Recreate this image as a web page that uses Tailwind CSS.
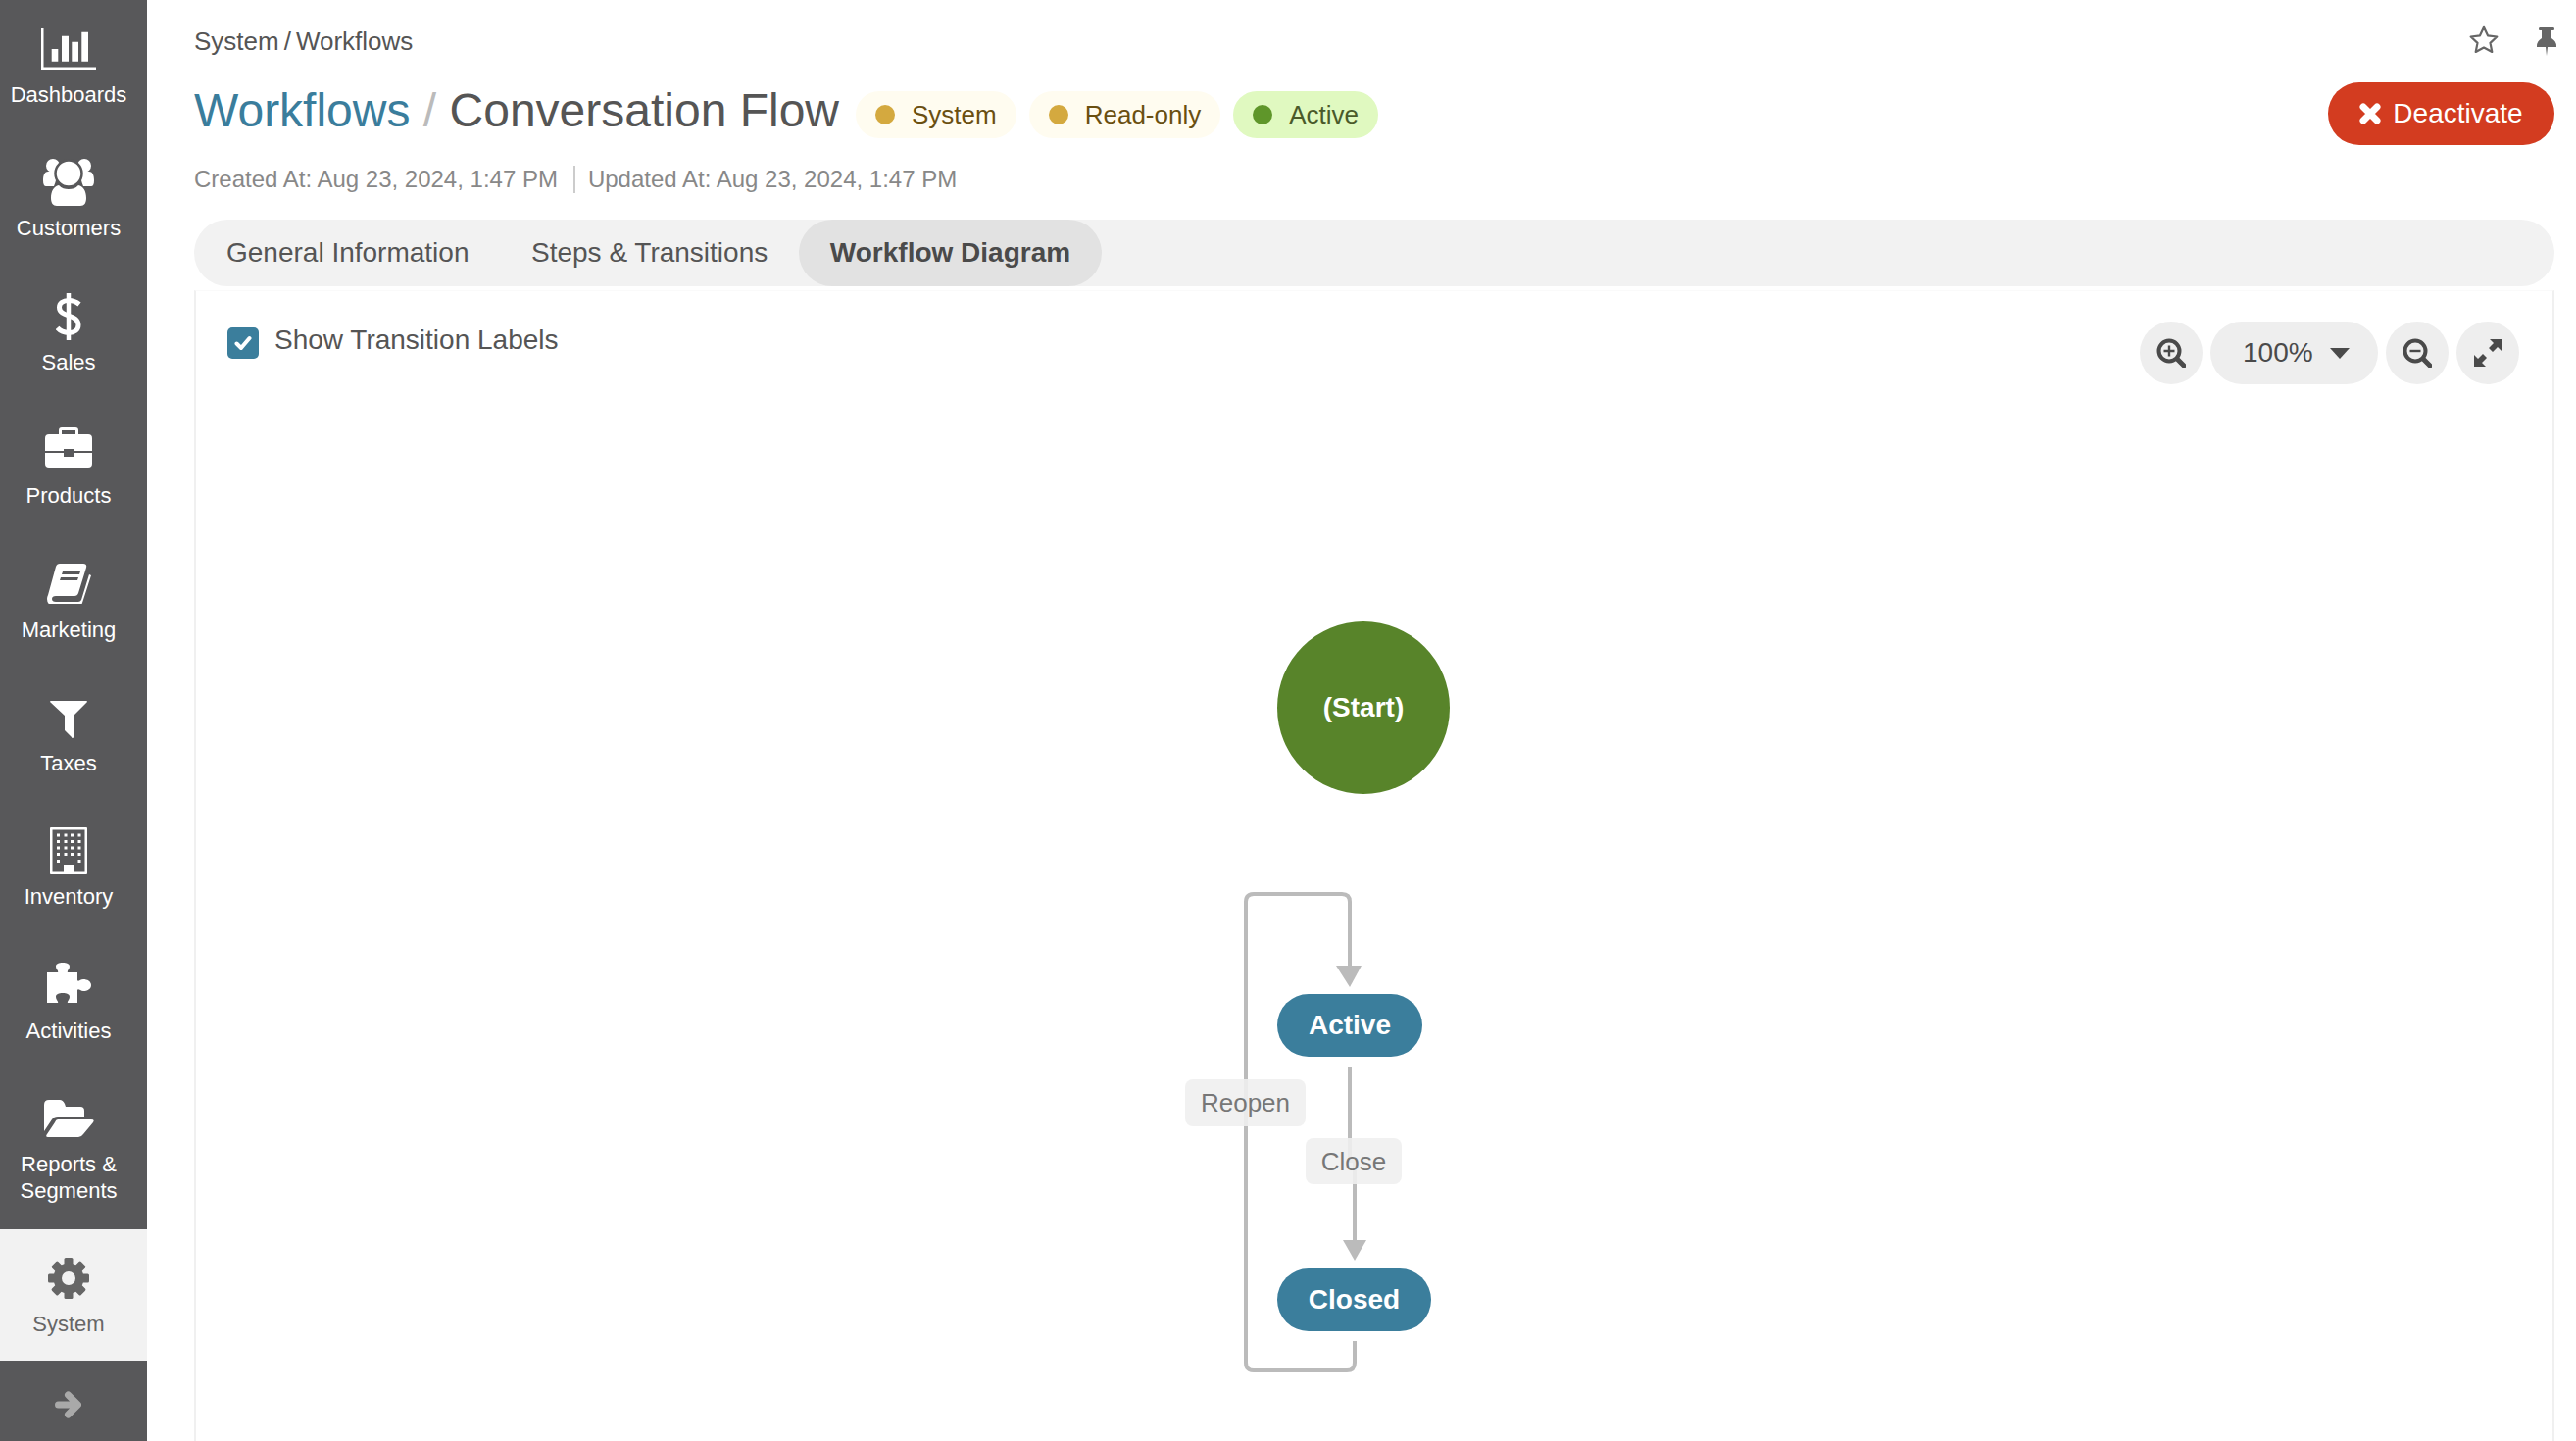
<!DOCTYPE html>
<html lang="en">
<head>
  <meta charset="UTF-8" />
  <meta name="viewport" content="width=device-width, initial-scale=1.0" />
  <title>Workflows - Conversation Flow</title>
  <script src="https://cdn.jsdelivr.net/npm/@tailwindcss/browser@4"></script>
</head>
<body class="flex h-[1470px] w-[2628px] overflow-hidden bg-white [font-family:'Liberation_Sans',Arial,sans-serif] text-[#555]">

  <!-- Sidebar -->
  <nav class="flex h-full w-[150px] shrink-0 flex-col bg-[#58585a] text-[22px] leading-[27px] text-white">
    <a class="flex h-[136.4px] flex-col items-center pr-[10px] pt-[26px]">
      <span class="flex h-[48px] items-center">
        <svg width="56" height="42" viewBox="0 0 56 42" fill="#fff"><path d="M0 0h2.500v39.500H56V42H0z"/><path d="M10.700 21h6.600v12.700h-6.600zM21 7.700h7v26h-7zM31.300 13.700h6.700v20h-6.700zM41.300 3.700H48v30h-6.700z"/></svg>
      </span>
      <span class="mt-[9px]">Dashboards</span>
    </a>
    <a class="flex h-[136.4px] flex-col items-center pr-[10px] pt-[26px]">
      <span class="flex h-[48px] items-center">
        <svg width="52" height="48" viewBox="0 0 52 48" fill="#fff"><circle cx="10" cy="7" r="7"/><circle cx="42" cy="7" r="7"/><path d="M5 13c-3 0-5 3-5 9 0 4 1 6 3 6h8c2-5 3-9 3-15zM47 13c3 0 5 3 5 9 0 4-1 6-3 6h-8c-2-5-3-9-3-15z"/><circle cx="26" cy="15" r="13.500" stroke="#58585a" stroke-width="2.500"/><path d="M16 27c3 3 6 4 10 4s7-1 10-4c5 1 8 6 8 13 0 5-2 8-6 8H14c-4 0-6-3-6-8 0-7 3-12 8-13z"/></svg>
      </span>
      <span class="mt-[9px]">Customers</span>
    </a>
    <a class="flex h-[136.4px] flex-col items-center pr-[10px] pt-[26px]">
      <span class="flex h-[48px] items-center">
        <svg width="26" height="48" viewBox="0 0 26 48" fill="none" stroke="#fff"><path d="M13 0v48" stroke-width="4.500"/><path d="M24 11.500C20.500 8.500 17 7.500 13 7.500 7 7.500 3.500 10.500 3.500 14.500 3.500 25 23 21 23 32.500 23 37.500 19 40.500 13 40.500 8.500 40.500 4.500 39 1.500 35.500" stroke-width="5"/></svg>
      </span>
      <span class="mt-[9px]">Sales</span>
    </a>
    <a class="flex h-[136.4px] flex-col items-center pr-[10px] pt-[26px]">
      <span class="flex h-[48px] items-center">
        <svg class="-translate-y-[3px]" width="48" height="41" viewBox="0 0 48 41" fill="#fff"><path d="M14 7V3q0-3 3-3h14q3 0 3 3v4h-3V3H17v4z"/><path d="M4 7h40q4 0 4 4v13H29v-2H19v2H0V11q0-4 4-4z"/><path d="M0 26h19v4h10v-4h19v11q0 4-4 4H4q-4 0-4-4z"/></svg>
      </span>
      <span class="mt-[9px]">Products</span>
    </a>
    <a class="flex h-[136.4px] flex-col items-center pr-[10px] pt-[26px]">
      <span class="flex h-[48px] items-center">
        <svg width="45" height="41" viewBox="0 0 45 41" fill="#fff"><path d="M13 0h24q4 0 3 4l-8 26q-1 3-4 3H9q-4 0-4 3t4 3h23q2 0 3-2l8-26 2 1-9 28q-1 3-4 3H8q-8 0-8-7 0-2 1-4L9 3q1-3 4-3z"/><path d="M16 8h18l-1 3H15zM14 14h18l-1 3H13z" fill="#58585a"/></svg>
      </span>
      <span class="mt-[9px]">Marketing</span>
    </a>
    <a class="flex h-[136.4px] flex-col items-center pr-[10px] pt-[26px]">
      <span class="flex h-[48px] items-center">
        <svg class="translate-y-[2px]" width="38" height="38" viewBox="0 0 38 38" fill="#fff"><path d="M1 0h36q1 0 1 1L24 15v22q0 1-1 1t-1-1l-7-7V15L0 1q0-1 1-1z"/></svg>
      </span>
      <span class="mt-[9px]">Taxes</span>
    </a>
    <a class="flex h-[136.4px] flex-col items-center pr-[10px] pt-[26px]">
      <span class="flex h-[48px] items-center">
        <svg width="38" height="48" viewBox="0 0 38 48" fill="#fff"><path d="M1 0h36q1 0 1 1v46q0 1-1 1H1q-1 0-1-1V1q0-1 1-1zm1.500 2.500v43h33v-43z"/><path d="M14 38h10v9H14z"/><path d="M7 6.500h3v3H7zM14.500 6.500h3v3h-3zM21 6.500h3v3h-3zM28.500 6.500h3v3h-3zM7 13h3v3H7zM14.500 13h3v3h-3zM21 13h3v3h-3zM28.500 13h3v3h-3zM7 19.500h3v3H7zM14.500 19.500h3v3h-3zM21 19.500h3v3h-3zM28.500 19.500h3v3h-3zM7 26h3v3H7zM14.500 26h3v3h-3zM21 26h3v3h-3zM28.500 26h3v3h-3zM7 33h3v3H7zM28.500 33h3v3h-3z"/></svg>
      </span>
      <span class="mt-[9px]">Inventory</span>
    </a>
    <a class="flex h-[136.4px] flex-col items-center pr-[10px] pt-[26px]">
      <span class="flex h-[48px] items-center">
        <svg class="-translate-y-[2px]" width="45" height="41" viewBox="0 0 45 41" fill="#fff"><path d="M0 10h11c1-2-2-3-2-6 0-3 3-4 7-4s7 1 7 4c0 3-3 4-2 6h10v8c1 2 3-1 6-1 4 0 8 2 8 6s-4 6-8 6c-3 0-5-3-6-1v13H21c-1-1 2-3 2-6 0-3-3-4-7-4s-7 1-7 4c0 3 3 5 2 6H0z"/></svg>
      </span>
      <span class="mt-[9px]">Activities</span>
    </a>
    <a class="flex h-[162.8px] flex-col items-center pr-[10px] pt-[26px]">
      <span class="flex h-[48px] items-center">
        <svg width="51" height="38" viewBox="0 0 51 38" fill="#fff"><path d="M0 5q0-5 5-5h11q3 0 5 4l1 3h15q4 0 4 4v6H14q-4 0-6 3L0 32z"/><path d="M14 20h34q4 0 2 3L40 35q-2 3-5 3H4q-3 0-1-3L11 23q1-3 3-3z"/></svg>
      </span>
      <span class="mt-[9px] text-center">Reports &amp;<br />Segments</span>
    </a>
    <a class="flex h-[134px] flex-col items-center bg-[#f2f2f2] pr-[10px] pt-[26px] text-[#666]">
      <span class="flex h-[48px] items-center">
        <svg width="42" height="42" viewBox="0 0 42 42" fill="#666"><circle cx="21" cy="21" r="15.500"/><g><rect x="16.500" y="0" width="9" height="42" rx="1.500"/><rect x="16.500" y="0" width="9" height="42" rx="1.500" transform="rotate(45 21 21)"/><rect x="16.500" y="0" width="9" height="42" rx="1.500" transform="rotate(90 21 21)"/><rect x="16.500" y="0" width="9" height="42" rx="1.500" transform="rotate(135 21 21)"/></g><circle cx="21" cy="21" r="7" fill="#f2f2f2"/></svg>
      </span>
      <span class="mt-[9px]">System</span>
    </a>
    <div class="flex flex-1 items-center justify-center pr-[11px] pt-[8px]">
      <svg width="27" height="28" viewBox="0 0 27 28" fill="none" stroke="#a9a9a9" stroke-width="7" stroke-linecap="round" stroke-linejoin="round"><path d="M3.500 14H22M13.500 4 23.500 14l-10 10"/></svg>
    </div>
  </nav>

  <!-- Main -->
  <main class="flex h-full min-w-0 flex-1 flex-col pl-[48px] pr-[22px]">
    <div class="flex h-[34px] mt-[25px] items-center justify-between">
      <div class="flex gap-[5px] text-[26px] text-[#555]"><span>System</span><span>/</span><span>Workflows</span></div>
      <div class="mr-[-2px] flex items-center gap-[39px]">
        <svg class="-mt-[4px]" width="30" height="28" viewBox="0 0 30 28" fill="none" stroke="#666" stroke-width="2.200" stroke-linejoin="round"><path d="M15 1.800 19 10.300l9.300 1.200-6.800 6.400 1.800 9.100-8.300-4.500-8.300 4.500 1.800-9.100-6.800-6.400L11 10.300z"/></svg>
        <svg class="mt-[1px]" width="20" height="29" viewBox="0 0 20 29" fill="#666"><path d="M3 0h14q1 0 1 1.500T17 3h-2v8q5 3 5 8v1H11l-1 9-1-9H0v-1q0-5 5-8V3H3Q2 3 2 1.500T3 0z"/></svg>
      </div>
    </div>

    <div class="mt-[25px] flex h-[64px] items-center justify-between">
      <div class="flex items-center">
        <h1 class="mb-[6px] text-[48px] leading-[56px] whitespace-nowrap"><span class="text-[#3a7d9c]">Workflows</span> <span class="text-[#bbb]">/</span> <span class="text-[#555]">Conversation Flow</span></h1>
        <div class="ml-[17px] mt-[2px] flex gap-[13px] text-[26px]">
          <span class="flex h-[48px] items-center gap-[17px] rounded-full bg-[#fffcf0] pl-[20px] pr-[20px] text-[#6a4f10]"><i class="h-[20px] w-[20px] rounded-full bg-[#d4a93f]"></i>System</span>
          <span class="flex h-[48px] items-center gap-[17px] rounded-full bg-[#fffcf0] pl-[20px] pr-[20px] text-[#6a4f10]"><i class="h-[20px] w-[20px] rounded-full bg-[#d4a93f]"></i>Read-only</span>
          <span class="flex h-[48px] items-center gap-[17px] rounded-full bg-[#e0f9c0] pl-[20px] pr-[20px] text-[#4a5a2a]"><i class="h-[20px] w-[20px] rounded-full bg-[#5f962a]"></i>Active</span>
        </div>
      </div>
      <button class="flex h-[64px] w-[231px] items-center justify-center gap-[12px] rounded-full bg-[#d33c20] text-[28px] text-white">
        <svg width="22" height="22" viewBox="0 0 22 22" fill="none" stroke="#fff" stroke-width="7" stroke-linecap="round"><path d="M4 4l14 14M18 4 4 18"/></svg>
        Deactivate
      </button>
    </div>

    <div class="mt-[21px] flex h-[28px] items-center text-[24px] text-[#888]">
      <span>Created At: Aug 23, 2024, 1:47 PM</span>
      <span class="ml-[16px] mr-[13px] h-[28px] w-[2px] bg-[#ccc]"></span>
      <span>Updated At: Aug 23, 2024, 1:47 PM</span>
    </div>

    <div class="mt-[27px] flex h-[68px] shrink-0 items-center rounded-full bg-[#f2f2f2] text-[28px] text-[#555]">
      <a class="flex h-full w-[311px] items-center pl-[33px]">General Information</a>
      <a class="flex h-full w-[306px] items-center pl-[33px]">Steps &amp; Transitions</a>
      <a class="flex h-full w-[309px] items-center justify-center rounded-full bg-[#e2e2e2] font-bold text-[#4a4a4a]">Workflow Diagram</a>
    </div>

    <!-- Diagram card -->
    <section class="relative mt-[4px] flex-1 border-x-2 border-t border-x-[#f0f0f0] border-t-[#fafafa]">
      <div class="flex items-start justify-between pl-[32px] pr-[34px] pt-[31px]">
        <label class="mt-[6px] flex items-start gap-[16px] text-[28px] leading-[26px] text-[#555]">
          <span class="flex h-[32px] w-[32px] items-center justify-center rounded-[5px] bg-[#3b7e9c]">
            <svg width="20" height="16" viewBox="0 0 20 16" fill="none" stroke="#fff" stroke-width="4" stroke-linecap="round" stroke-linejoin="round"><path d="M3.500 8.500 8 13l8.500-10"/></svg>
          </span>
          Show Transition Labels
        </label>
        <div class="flex gap-[8px] text-[28px] text-[#4a4a4a]">
          <button class="flex h-[64px] w-[64px] items-center justify-center rounded-full bg-[#eee]">
            <svg width="30" height="30" viewBox="0 0 30 30" fill="none" stroke="#4a4a4a"><circle cx="13" cy="13" r="10.500" stroke-width="4"/><path d="M21 21l7 7" stroke-width="5" stroke-linecap="round"/><path d="M7.500 13h11M13 7.500v11" stroke-width="2.400"/></svg>
          </button>
          <button class="flex h-[64px] w-[171px] items-center rounded-full bg-[#eee] pl-[33px]">
            100%
            <svg class="ml-[17px]" width="20" height="11" viewBox="0 0 20 11" fill="#4a4a4a"><path d="M0 0h20L10 11z"/></svg>
          </button>
          <button class="flex h-[64px] w-[64px] items-center justify-center rounded-full bg-[#eee]">
            <svg width="30" height="30" viewBox="0 0 30 30" fill="none" stroke="#4a4a4a"><circle cx="13" cy="13" r="10.500" stroke-width="4"/><path d="M21 21l7 7" stroke-width="5" stroke-linecap="round"/><path d="M7.500 13h11" stroke-width="2.400"/></svg>
          </button>
          <button class="flex h-[64px] w-[64px] items-center justify-center rounded-full bg-[#eee]">
            <svg width="28" height="28" viewBox="0 0 28 28" fill="#4a4a4a"><path d="M16 0h12v12l-4-4-5 5-4-4 5-5zM0 28V16l4 4 5-5 4 4-5 5 4 4z"/></svg>
          </button>
        </div>
      </div>

      <!-- Edges use page coordinates through the viewBox -->
      <svg class="pointer-events-none absolute left-0 top-0" width="2404" height="1173" viewBox="200 297 2404 1173" fill="none" stroke="#bbb" stroke-width="4">
        <path d="M1382 1368v22q0 8-8 8h-95q-8 0-8-8V920q0-8 8-8h90q8 0 8 8v70"/>
        <path d="M1377 1088v96h5v86"/>
        <path d="M1363 985h26l-12 22z" fill="#bbb" stroke="none"/>
        <path d="M1370 1265h24l-12 21z" fill="#bbb" stroke="none"/>
      </svg>

      <div class="absolute left-[1103px] top-[337px] flex h-[176px] w-[176px] items-center justify-center rounded-full bg-[#58842a] text-[28px] font-bold text-white">(Start)</div>
      <div class="absolute left-[1103px] top-[717px] flex h-[64px] w-[148px] items-center justify-center rounded-full bg-[#3b7e9c] text-[28px] font-bold text-white">Active</div>
      <div class="absolute left-[1103px] top-[997px] flex h-[64px] w-[157px] items-center justify-center rounded-full bg-[#3b7e9c] text-[28px] font-bold text-white">Closed</div>
      <div class="absolute left-[1009px] top-[804px] flex h-[48px] w-[123px] items-center justify-center rounded-[8px] bg-[#f0f0f0]/90 text-[26px] text-[#777]">Reopen</div>
      <div class="absolute left-[1132px] top-[864px] flex h-[47px] w-[98px] items-center justify-center rounded-[8px] bg-[#f0f0f0]/90 pt-[1px] text-[26px] text-[#777]">Close</div>
    </section>
  </main>
</body>
</html>
